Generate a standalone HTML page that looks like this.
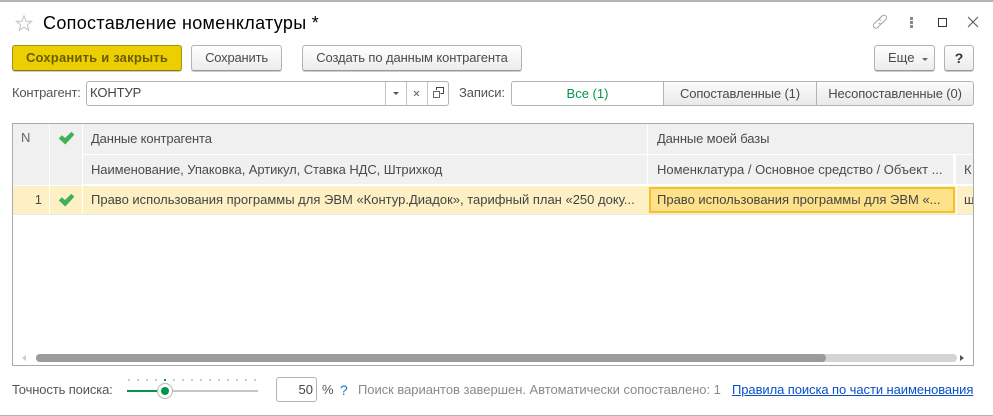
<!DOCTYPE html>
<html><head><meta charset="utf-8">
<style>
html,body{margin:0;padding:0;background:#fff}
#p{position:relative;width:993px;height:416px;overflow:hidden;background:#fff;font-family:"Liberation Sans",sans-serif;font-size:13px;color:#4b4b4b}
.a{position:absolute;white-space:nowrap;box-sizing:border-box}
.t{line-height:14px}
.b{border:1px solid #b3b3b3;border-bottom-color:#999;border-radius:3px;background:linear-gradient(#fff,#ececec);text-align:center;line-height:24px;height:26px;top:45px;color:#4b4b4b;letter-spacing:-.1px;box-shadow:0 1px 0 #ccc}
.h{background:#f0f0f0}
.s{letter-spacing:-.13px}
.z{letter-spacing:0}
</style></head><body><div id="p">
<div class="a" style="left:0;top:0;width:993px;height:2px;background:#b4b4b4"></div>
<div class="a" style="left:0;top:415px;width:993px;height:1px;background:#b4b4b4"></div>

<svg class="a" style="left:15px;top:14px" width="18" height="18" viewBox="0 0 18 18"><path d="M9 1.800 11 7.200 16.600 7.400 12.200 10.900 13.800 16.400 9 13.200 4.200 16.400 5.800 10.900 1.400 7.400 7 7.200Z" fill="#fff" stroke="#c4c8cc" stroke-width="1.100"/></svg>
<div class="a" style="left:43px;top:12px;font-size:18px;line-height:22px;color:#000;letter-spacing:.32px">Сопоставление номенклатуры *</div>

<svg class="a" style="left:870px;top:12px" width="20" height="20" viewBox="0 0 20 20" fill="none" stroke="#999" stroke-width=".9"><path d="M8.500 7.500 12 4a2.600 2.600 0 0 1 3.800 3.600l-3.600 3.600a2.600 2.600 0 0 1-3.600 0"/><path d="M11 12 7.600 15.600A2.600 2.600 0 0 1 3.900 12l3.600-3.600a2.600 2.600 0 0 1 3.600 0"/></svg>
<div class="a" style="left:910px;top:17px;width:3px;height:3px;background:#888"></div>
<div class="a" style="left:910px;top:21px;width:3px;height:3px;background:#888"></div>
<div class="a" style="left:910px;top:25px;width:3px;height:3px;background:#888"></div>
<div class="a" style="left:938px;top:18px;width:9px;height:9px;border:1.200px solid #333"></div>
<svg class="a" style="left:967px;top:16px" width="12" height="12" viewBox="0 0 12 12"><path d="M1 1 11 11M11 1 1 11" stroke="#555" stroke-width="1" fill="none"/></svg>

<div class="a b" style="left:12px;width:170px;background:#eccf00;border:1px solid #a58f10;border-bottom-color:#8e7b0c;color:#6b5c00;font-weight:bold;letter-spacing:.2px">Сохранить и закрыть</div>
<div class="a b" style="left:191px;width:91px;letter-spacing:-.2px">Сохранить</div>
<div class="a b" style="left:302px;width:220px">Создать по данным контрагента</div>
<div class="a b" style="left:874px;width:61px;text-align:left;padding-left:13px;letter-spacing:0">Еще</div>
<div class="a" style="left:922px;top:58px;border:3px solid transparent;border-top:3px solid #666;border-bottom:0"></div>
<div class="a b" style="left:944px;width:30px;font-size:14px;font-weight:bold;color:#333">?</div>

<div class="a t" style="left:12px;top:86px;color:#555;letter-spacing:-.2px">Контрагент:</div>
<div class="a" style="left:86px;top:81px;width:363px;height:25px;border:1px solid #b3b3b3;border-radius:3px"></div>
<div class="a t" style="left:90px;top:86px;font-size:13px;color:#444;letter-spacing:-.1px">КОНТУР</div>
<div class="a" style="left:385px;top:82px;width:1px;height:23px;background:#c4c4c4"></div>
<div class="a" style="left:406px;top:82px;width:1px;height:23px;background:#c4c4c4"></div>
<div class="a" style="left:427px;top:82px;width:1px;height:23px;background:#c4c4c4"></div>
<div class="a" style="left:393px;top:92px;border:3px solid transparent;border-top:3px solid #555;border-bottom:0"></div>
<svg class="a" style="left:413px;top:90px" width="7" height="7" viewBox="0 0 7 7"><path d="M1 1 6 6M6 1 1 6" stroke="#666" stroke-width="1"/></svg>
<svg class="a" style="left:433px;top:87px" width="11" height="11" viewBox="0 0 11 11" fill="none" stroke="#444"><path d="M3.500 3V.5H10.500V6.500H7.500"/><path d="M.5 4.500H6.500V10.500H.5Z" stroke="#666"/></svg>

<div class="a t s" style="left:459px;top:86px;color:#555">Записи:</div>
<div class="a" style="left:511px;top:81px;width:463px;height:25px;border:1px solid #b3b3b3;border-radius:3px;background:linear-gradient(#fbfbfb,#e9e9e9)"></div>
<div class="a" style="left:512px;top:82px;width:151px;height:23px;background:#fff;border-radius:2px 0 0 2px;text-align:center;line-height:23px;color:#00964b">Все (1)</div>
<div class="a" style="left:663px;top:82px;width:1px;height:23px;background:#b3b3b3"></div>
<div class="a" style="left:816px;top:82px;width:1px;height:23px;background:#b3b3b3"></div>
<div class="a s" style="left:664px;top:82px;width:152px;text-align:center;line-height:23px">Сопоставленные (1)</div>
<div class="a s" style="left:817px;top:82px;width:156px;text-align:center;line-height:23px">Несопоставленные (0)</div>

<div class="a" style="left:12px;top:123px;width:962px;height:243px;border:1px solid #a9a9a9;overflow:hidden">
 <div class="a h" style="left:0;top:0;width:36px;height:61px"></div>
 <div class="a h" style="left:37px;top:0;width:32px;height:61px"></div>
 <div class="a h" style="left:70px;top:0;width:564px;height:30px"></div>
 <div class="a h" style="left:70px;top:31px;width:564px;height:29px"></div>
 <div class="a h" style="left:635px;top:0;width:326px;height:30px"></div>
 <div class="a h" style="left:635px;top:31px;width:305px;height:29px"></div>
 <div class="a h" style="left:943px;top:31px;width:18px;height:29px"></div>
 <div class="a" style="left:0;top:62px;width:961px;height:28px;background:#fdf0c4"></div>
 <div class="a" style="left:36px;top:62px;width:1px;height:28px;background:#fff"></div>
 <div class="a" style="left:69px;top:62px;width:1px;height:28px;background:#fff"></div>
 <div class="a" style="left:0;top:90px;width:961px;height:1px;background:#e8e8e8"></div>
 <div class="a" style="left:636px;top:63px;width:306px;height:26px;background:#fee28a;border:2px solid #f3c12c"></div>
 <div class="a" style="left:943px;top:62px;width:1px;height:28px;background:#fff"></div>
 <div class="a t" style="left:8px;top:7px;color:#666;font-size:13px">N</div>
 <div class="a t s" style="left:78px;top:8px">Данные контрагента</div>
 <div class="a t s" style="left:644px;top:8px">Данные моей базы</div>
 <div class="a t" style="left:78px;top:39px;letter-spacing:-.08px">Наименование, Упаковка, Артикул, Ставка НДС, Штрихкод</div>
 <div class="a t z" style="left:644px;top:39px">Номенклатура / Основное средство / Объект ...</div>
 <div class="a t" style="left:951px;top:39px">К</div>
 <div class="a t" style="left:20px;top:69px;width:9px;text-align:right;font-size:13px">1</div>
 <div class="a t z" style="left:78px;top:69px;color:#444">Право использования программы для ЭВМ «Контур.Диадок», тарифный план «250 доку...</div>
 <div class="a t z" style="left:644px;top:69px;color:#444">Право использования программы для ЭВМ «...</div>
 <div class="a t" style="left:951px;top:69px;color:#444">ш</div>
 <svg class="a" style="left:45px;top:7px" width="17" height="14" viewBox="0 0 17 14"><path d="M.8 7.500 3.800 4.300 7 7 13.500.8 16.300 3.800 7.300 13.500Z" fill="#3fb156"/></svg>
 <svg class="a" style="left:45px;top:69px" width="17" height="14" viewBox="0 0 17 14"><path d="M.8 7.500 3.800 4.300 7 7 13.500.8 16.300 3.800 7.300 13.500Z" fill="#3fb156"/></svg>
 <div class="a" style="left:23px;top:230px;width:921px;height:8px;border-radius:4px;background:#d4d4d4"></div>
 <div class="a" style="left:23px;top:230px;width:790px;height:8px;border-radius:4px;background:#9b9b9b"></div>
 <div class="a" style="left:9px;top:231px;border:3px solid transparent;border-right:4px solid #ccc;border-left:0"></div>
 <div class="a" style="left:947px;top:231px;border:3px solid transparent;border-left:4px solid #555;border-right:0"></div>
</div>

<div class="a t s" style="left:12px;top:383px;color:#555">Точность поиска:</div>
<svg class="a" style="left:127px;top:376px" width="134" height="28" viewBox="0 0 134 28">
<g fill="#ccc"><rect x="1" y="3" width="2" height="2"/><rect x="10" y="3" width="2" height="2"/><rect x="19" y="3" width="2" height="2"/><rect x="28" y="3" width="2" height="2"/><rect x="46" y="3" width="2" height="2"/><rect x="55" y="3" width="2" height="2"/><rect x="64" y="3" width="2" height="2"/><rect x="73" y="3" width="2" height="2"/><rect x="82" y="3" width="2" height="2"/><rect x="91" y="3" width="2" height="2"/><rect x="100" y="3" width="2" height="2"/><rect x="109" y="3" width="2" height="2"/><rect x="118" y="3" width="2" height="2"/><rect x="127" y="3" width="2" height="2"/></g>
<rect x="37" y="3" width="2" height="2" fill="#00964b"/>
<rect x="0" y="14" width="131" height="2" fill="#c6c6c6"/><rect x="0" y="14" width="32" height="2" fill="#00964b"/>
<circle cx="38" cy="15" r="7.500" fill="#fff" stroke="#b5b5b5"/><circle cx="38" cy="15" r="4" fill="#00964b"/></svg>
<div class="a" style="left:276px;top:377px;width:41px;height:25px;border:1px solid #b3b3b3;border-radius:3px;text-align:right;padding-right:3px;line-height:23px;font-size:13px;color:#444">50</div>
<div class="a t" style="left:322px;top:383px;color:#555">%</div>
<div class="a t" style="left:340px;top:383px;color:#1d79c4;font-size:14px">?</div>
<div class="a t" style="left:358px;top:383px;color:#8a8a8a;letter-spacing:-.04px">Поиск вариантов завершен. Автоматически сопоставлено: 1</div>
<div class="a t" style="left:732px;top:383px;color:#0a50c8;text-decoration:underline;letter-spacing:-.08px">Правила поиска по части наименования</div>
</div></body></html>
